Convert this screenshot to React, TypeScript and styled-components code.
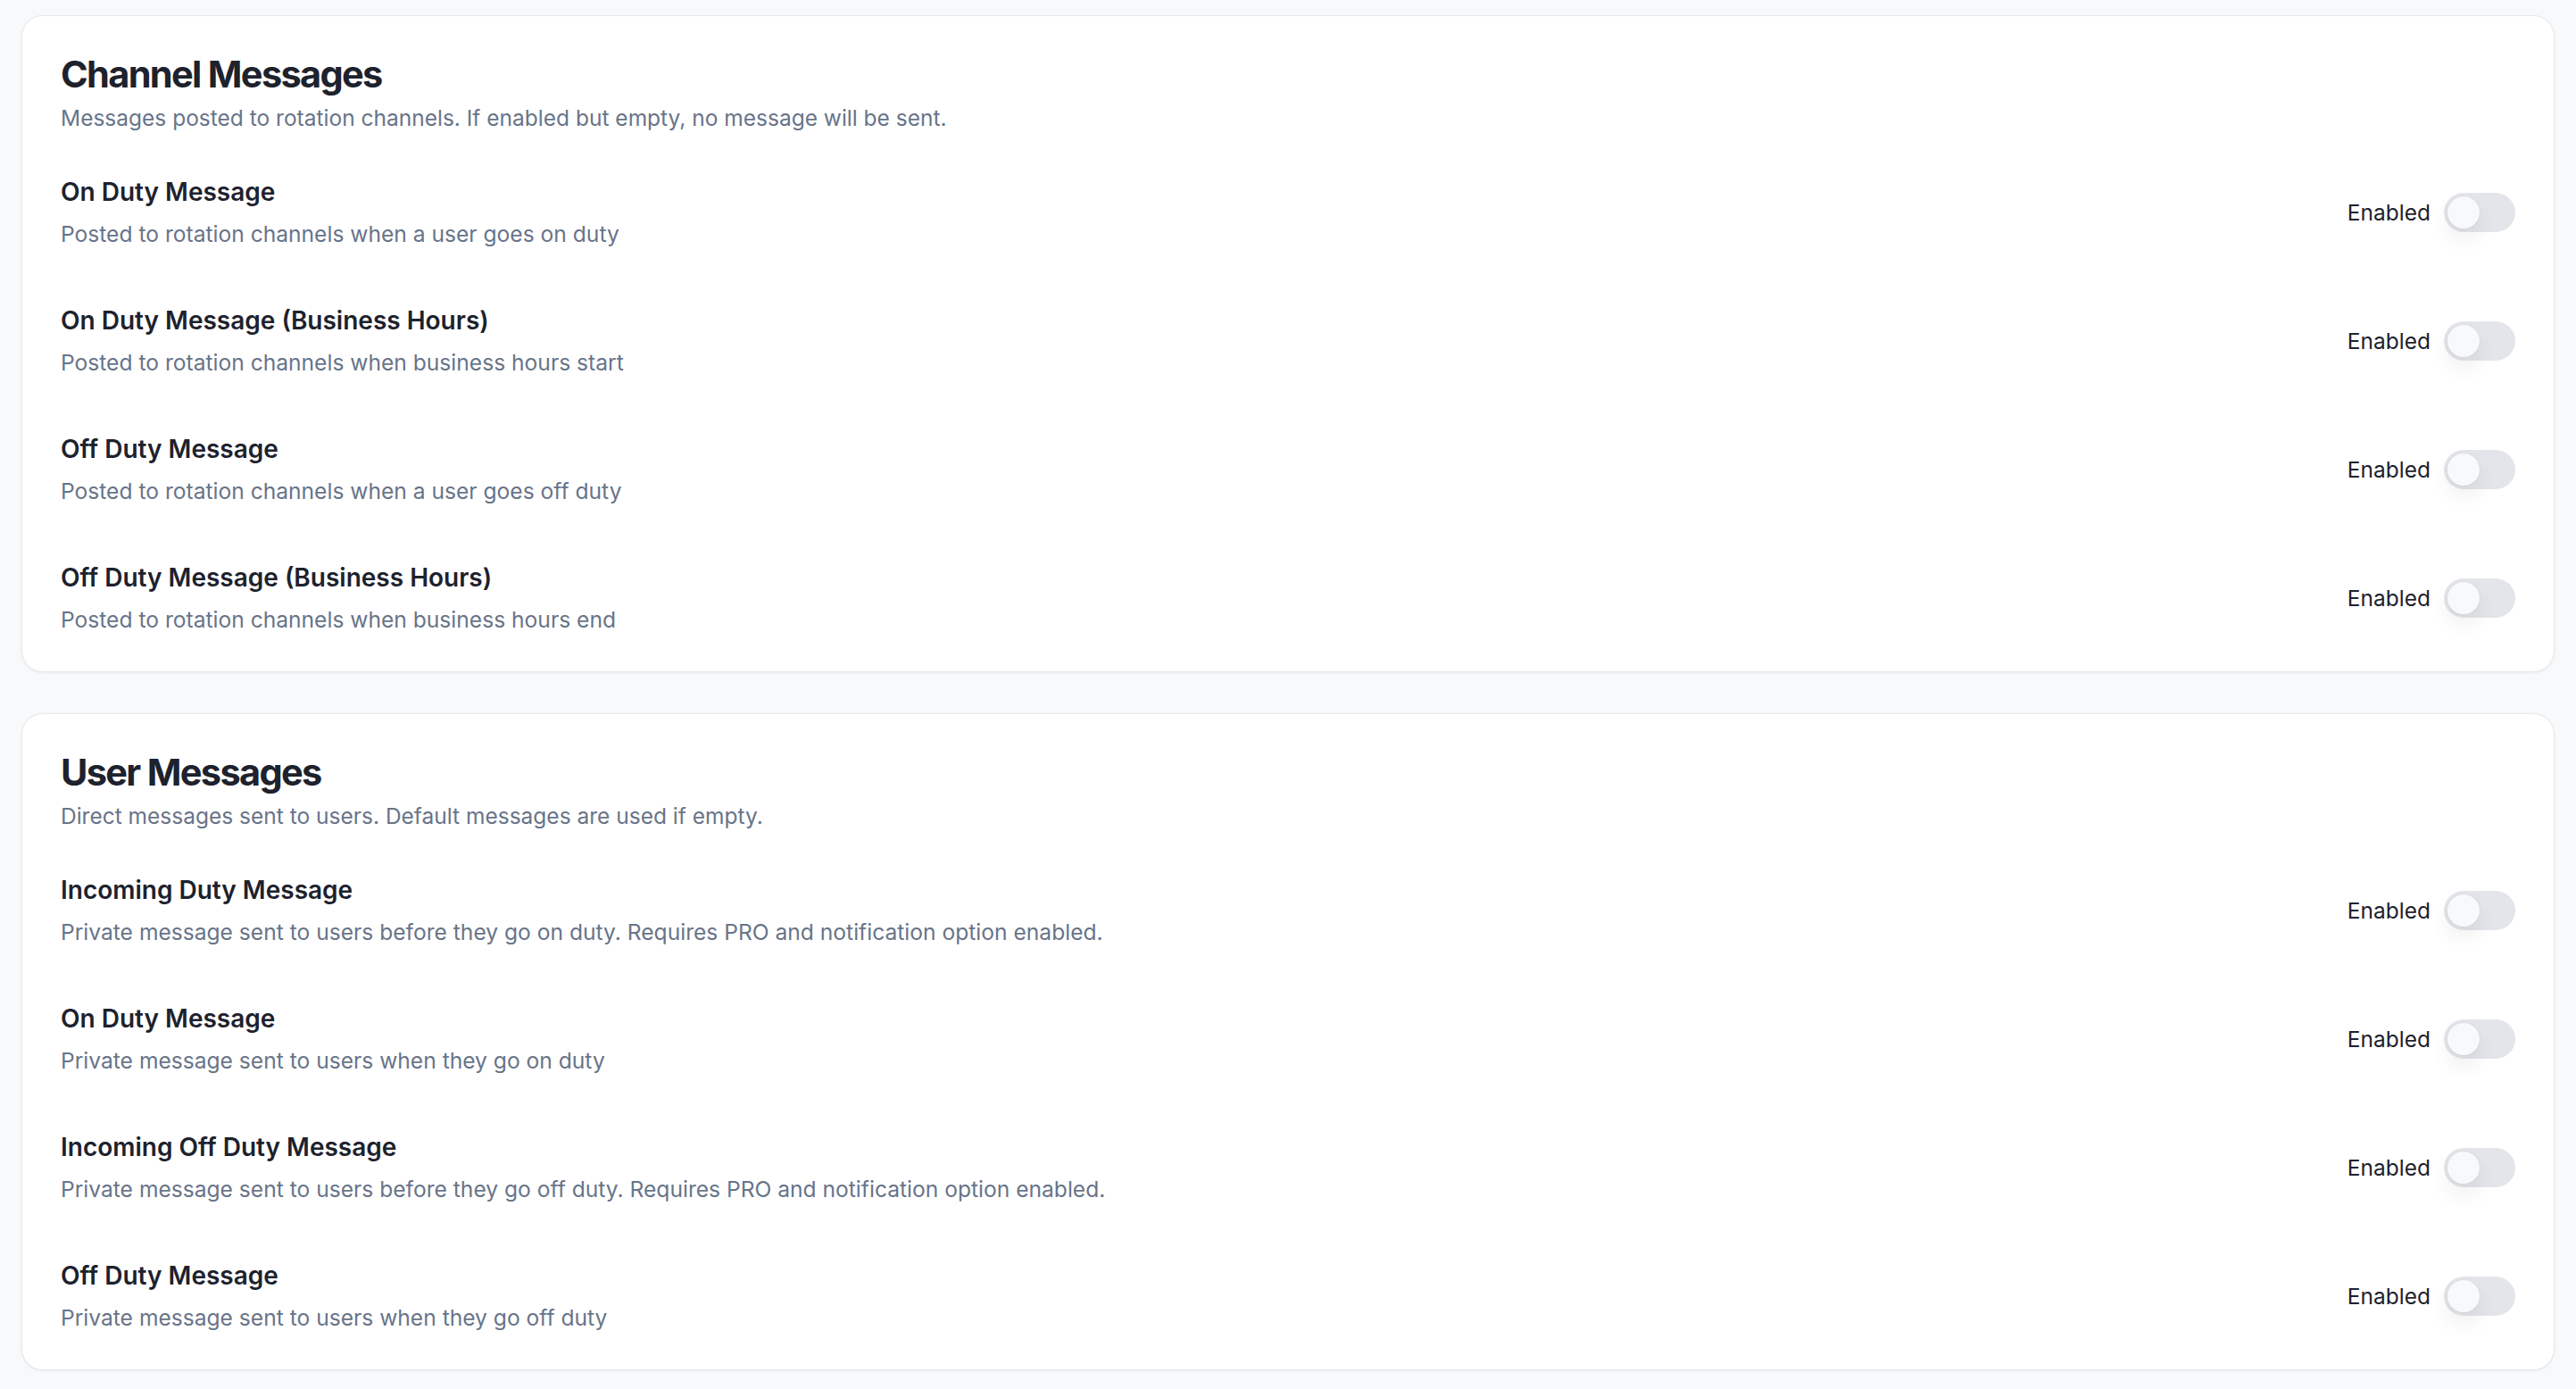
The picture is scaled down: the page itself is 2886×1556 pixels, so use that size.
import React, { useState } from 'react';
import styled, { createGlobalStyle } from 'styled-components';

const GlobalStyle = createGlobalStyle`
    html, body {
        margin: 0;
        padding: 0;
        background: #f8f9fb;
    }
    body {
        font-family: Inter, "Noto Sans", "Liberation Sans", sans-serif;
        -webkit-font-smoothing: antialiased;
    }
`;

const Page = styled.div`
    width: 100%;
    min-height: 1556px;
    box-sizing: border-box;
    padding: 17px 24px 18px;
    display: flex;
    flex-direction: column;
    gap: 46px;
    background: #f8f9fb;
`;

const Card = styled.section`
    background: #ffffff;
    border: 1px solid #e6e8ec;
    border-radius: 24px;
    box-shadow: 0 1px 3px rgba(16, 24, 40, 0.06);
    padding: 40px 43px;
    display: flex;
    flex-direction: column;
`;

const CardHeader = styled.header`
    display: flex;
    flex-direction: column;
    gap: 6px;
    margin-bottom: 45px;
`;

const Title = styled.h2`
    margin: 0;
    font-size: 41.5px;
    line-height: 50px;
    font-weight: 700;
    letter-spacing: -0.04em;
    color: #1d222d;
`;

const Subtitle = styled.p`
    margin: 0;
    font-size: 24.5px;
    line-height: 37px;
    color: #687489;
`;

const List = styled.div`
    display: flex;
    flex-direction: column;
    gap: 60px;
`;

const Row = styled.div`
    display: flex;
    align-items: center;
    justify-content: space-between;
`;

const RowText = styled.div`
    display: flex;
    flex-direction: column;
    gap: 10px;
`;

const RowTitle = styled.div`
    font-size: 28px;
    line-height: 38px;
    font-weight: 600;
    color: #1d222d;
`;

const RowDesc = styled.div`
    font-size: 24.6px;
    line-height: 36px;
    color: #687489;
`;

const ToggleWrap = styled.label`
    display: flex;
    align-items: center;
    gap: 15px;
    cursor: pointer;
`;

const ToggleLabel = styled.span`
    font-size: 24.5px;
    color: #1d222d;
`;

const Track = styled.span<{ $on: boolean }>`
    position: relative;
    width: 80px;
    height: 44px;
    border-radius: 22px;
    background: ${(p) => (p.$on ? '#2563eb' : '#e3e5ea')};
    transition: background 0.2s;
`;

const Knob = styled.span<{ $on: boolean }>`
    position: absolute;
    top: 4px;
    left: ${(p) => (p.$on ? '40px' : '4px')};
    width: 36px;
    height: 36px;
    border-radius: 50%;
    background: #f8f9fb;
    box-shadow: 0 0 0 1px rgba(0, 0, 0, 0.03), 0 12px 24px rgba(0, 0, 0, 0.07);
    transition: left 0.2s;
`;

interface Item {
    title: string;
    desc: string;
}

interface Section {
    title: string;
    desc: string;
    items: Item[];
}

const sections: Section[] = [
    {
        title: 'Channel Messages',
        desc: 'Messages posted to rotation channels. If enabled but empty, no message will be sent.',
        items: [
            { title: 'On Duty Message', desc: 'Posted to rotation channels when a user goes on duty' },
            { title: 'On Duty Message (Business Hours)', desc: 'Posted to rotation channels when business hours start' },
            { title: 'Off Duty Message', desc: 'Posted to rotation channels when a user goes off duty' },
            { title: 'Off Duty Message (Business Hours)', desc: 'Posted to rotation channels when business hours end' },
        ],
    },
    {
        title: 'User Messages',
        desc: 'Direct messages sent to users. Default messages are used if empty.',
        items: [
            { title: 'Incoming Duty Message', desc: 'Private message sent to users before they go on duty. Requires PRO and notification option enabled.' },
            { title: 'On Duty Message', desc: 'Private message sent to users when they go on duty' },
            { title: 'Incoming Off Duty Message', desc: 'Private message sent to users before they go off duty. Requires PRO and notification option enabled.' },
            { title: 'Off Duty Message', desc: 'Private message sent to users when they go off duty' },
        ],
    },
];

const Toggle: React.FC = () => {
    const [on, setOn] = useState(false);
    return (
        <ToggleWrap onClick={() => setOn(!on)}>
            <ToggleLabel>Enabled</ToggleLabel>
            <Track $on={on}>
                <Knob $on={on} />
            </Track>
        </ToggleWrap>
    );
};

export default function App() {
    return (
        <>
            <GlobalStyle />
            <Page>
                {sections.map((section) => (
                    <Card key={section.title}>
                        <CardHeader>
                            <Title>{section.title}</Title>
                            <Subtitle>{section.desc}</Subtitle>
                        </CardHeader>
                        <List>
                            {section.items.map((item) => (
                                <Row key={item.title}>
                                    <RowText>
                                        <RowTitle>{item.title}</RowTitle>
                                        <RowDesc>{item.desc}</RowDesc>
                                    </RowText>
                                    <Toggle />
                                </Row>
                            ))}
                        </List>
                    </Card>
                ))}
            </Page>
        </>
    );
}
